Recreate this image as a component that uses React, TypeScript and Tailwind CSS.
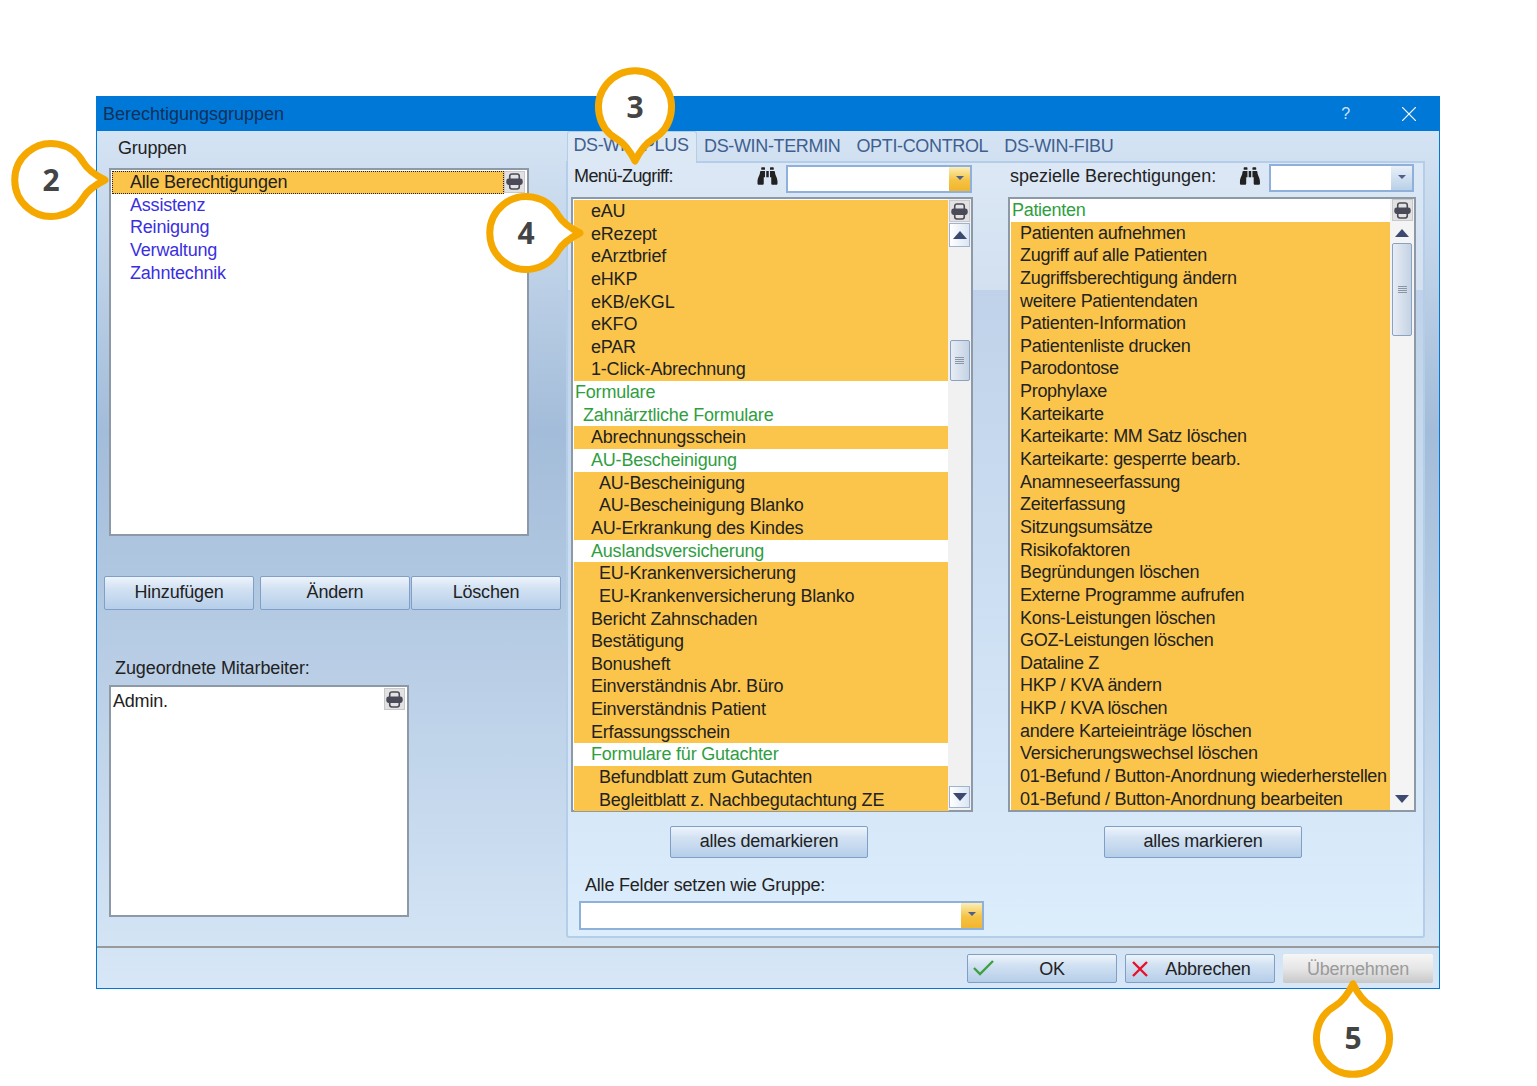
import { FaBinoculars } from 'react-icons/fa'

type Row = { label: string; level: 1 | 2 | 3 | 4; head?: boolean }

const menuRows: Row[] = [
  { label: 'eAU', level: 3 },
  { label: 'eRezept', level: 3 },
  { label: 'eArztbrief', level: 3 },
  { label: 'eHKP', level: 3 },
  { label: 'eKB/eKGL', level: 3 },
  { label: 'eKFO', level: 3 },
  { label: 'ePAR', level: 3 },
  { label: '1-Click-Abrechnung', level: 3 },
  { label: 'Formulare', level: 1, head: true },
  { label: 'Zahnärztliche Formulare', level: 2, head: true },
  { label: 'Abrechnungsschein', level: 3 },
  { label: 'AU-Bescheinigung', level: 3, head: true },
  { label: 'AU-Bescheinigung', level: 4 },
  { label: 'AU-Bescheinigung Blanko', level: 4 },
  { label: 'AU-Erkrankung des Kindes', level: 3 },
  { label: 'Auslandsversicherung', level: 3, head: true },
  { label: 'EU-Krankenversicherung', level: 4 },
  { label: 'EU-Krankenversicherung Blanko', level: 4 },
  { label: 'Bericht Zahnschaden', level: 3 },
  { label: 'Bestätigung', level: 3 },
  { label: 'Bonusheft', level: 3 },
  { label: 'Einverständnis Abr. Büro', level: 3 },
  { label: 'Einverständnis Patient', level: 3 },
  { label: 'Erfassungsschein', level: 3 },
  { label: 'Formulare für Gutachter', level: 3, head: true },
  { label: 'Befundblatt zum Gutachten', level: 4 },
  { label: 'Begleitblatt z. Nachbegutachtung ZE', level: 4 },
]

const specialRows = [
  'Patienten aufnehmen',
  'Zugriff auf alle Patienten',
  'Zugriffsberechtigung ändern',
  'weitere Patientendaten',
  'Patienten-Information',
  'Patientenliste drucken',
  'Parodontose',
  'Prophylaxe',
  'Karteikarte',
  'Karteikarte: MM Satz löschen',
  'Karteikarte: gesperrte bearb.',
  'Anamneseerfassung',
  'Zeiterfassung',
  'Sitzungsumsätze',
  'Risikofaktoren',
  'Begründungen löschen',
  'Externe Programme aufrufen',
  'Kons-Leistungen löschen',
  'GOZ-Leistungen löschen',
  'Dataline Z',
  'HKP / KVA ändern',
  'HKP / KVA löschen',
  'andere Karteieinträge löschen',
  'Versicherungswechsel löschen',
  '01-Befund / Button-Anordnung wiederherstellen',
  '01-Befund / Button-Anordnung bearbeiten',
]

const indent = { 1: 'pl-px', 2: 'pl-[9px]', 3: 'pl-[17px]', 4: 'pl-[25px]' }

function PrintIcon() {
  return (
    <svg viewBox="0 0 16 16" className="h-[17px] w-[17px]" fill="none" stroke="#4a4a58" strokeWidth="1.5">
      <path d="M3.5 6V3a2 2 0 0 1 2-2h5a2 2 0 0 1 2 2v3" />
      <rect x="1" y="6" width="14" height="4.5" rx="1.5" fill="#4a4a58" />
      <path d="M3.5 10v3a2 2 0 0 0 2 2h5a2 2 0 0 0 2-2v-3" />
    </svg>
  )
}

function PrintButton() {
  return (
    <div className="flex h-[22px] w-[21px] items-center justify-center border border-[#c8c8c8] bg-[#e2e2e2]">
      <PrintIcon />
    </div>
  )
}

function Arrow({ down }: { down?: boolean }) {
  return (
    <svg viewBox="0 0 14 8" className="h-[8px] w-[14px]">
      <path d={down ? 'M0 0h14L7 8z' : 'M7 0l7 8H0z'} fill="#3c4a70" />
    </svg>
  )
}

function Grip() {
  return (
    <div className="flex w-[9px] flex-col gap-px">
      <div className="h-px bg-[#8a95a5]" />
      <div className="h-px bg-[#8a95a5]" />
      <div className="h-px bg-[#8a95a5]" />
      <div className="h-px bg-[#8a95a5]" />
    </div>
  )
}

function ComboBox({ className, yellow }: { className: string; yellow?: boolean }) {
  return (
    <div className={`flex border-2 border-[#8fb0da] bg-white ${className}`}>
      <div className="flex-1" />
      <div
        className={`flex w-[21px] items-center justify-center pb-[2px] ${
          yellow
            ? 'bg-[linear-gradient(180deg,#fbeeb8,#f5c343_55%,#f2b52e)]'
            : 'bg-[linear-gradient(180deg,#e9f0f8,#b9d0e8)]'
        }`}
      >
        <svg viewBox="0 0 8 4" className="h-[4px] w-[8px]">
          <path d="M0 0h8L4 4z" fill="#4d5f8a" />
        </svg>
      </div>
    </div>
  )
}

function Btn({ label, className }: { label: string; className: string }) {
  return (
    <button className={`rounded-[2px] border border-[#7f9fc6] bg-[linear-gradient(180deg,#eef4fb,#d3e2f3_35%,#b5cee9)] text-center text-[#222] ${className}`}>
      {label}
    </button>
  )
}

function Callout({ n, left, top, angle }: { n: number; left: string; top: string; angle: number }) {
  return (
    <div className={`absolute z-20 h-[130px] w-[130px] ${left} ${top}`}>
      <svg viewBox="-65 -65 130 130" className="h-full w-full">
        <path
          transform={`rotate(${angle})`}
          d="M32 -18 A36.5 36.5 0 1 0 32 18 Q38 8 54 0 Q38 -8 32 -18 Z"
          fill="#fff"
          stroke="#f5a800"
          strokeWidth="7"
          strokeLinejoin="round"
        />
      </svg>
      <div className="absolute inset-0 flex items-center justify-center font-['Open_Sans',sans-serif] text-[30px] font-bold text-[#444]">
        {n}
      </div>
    </div>
  )
}

export default function App() {
  return (
    <div className="relative h-[1086px] w-[1537px] bg-white pl-[96px] pt-[96px] font-['Liberation_Sans',Arial,sans-serif] text-[18px] leading-[22.65px] tracking-[-0.2px] text-[#222]">
      <div className="flex h-[893px] w-[1344px] flex-col border border-[#0078d7]">
        {/* Title bar */}
        <div className="flex h-[34px] shrink-0 items-center bg-[#0078d7] pl-[6px] pr-[23px] text-[#10305a]">
          <span className="flex-1 tracking-normal">Berechtigungsgruppen</span>
          <span className="mr-[52px] text-[16px] text-[#cfe4fa]">?</span>
          <svg viewBox="0 0 14 14" className="h-[14px] w-[14px]" stroke="#fff" strokeWidth="1.2">
            <path d="M0 0l14 14M14 0L0 14" />
          </svg>
        </div>

        <div className="flex flex-1 flex-col bg-[linear-gradient(180deg,#d5e4f4_0%,#a3bcd9_35%,#d7e7f7_100%)]">
          <div className="flex flex-1">
            {/* Left column */}
            <div className="w-[469px] shrink-0 pl-[12px]">
              <div className="mt-[6px] pl-[9px]">Gruppen</div>
              <div className="relative mt-[8px] h-[368px] w-[420px] border-2 border-[#8e99a8] bg-white pl-[1px] pt-px">
                <div className="h-[23px] w-[392px] border border-dotted border-[#222] bg-[#fbc54c] pl-[17px] leading-[20px]">Alle Berechtigungen</div>
                <div className="pl-[18px] text-[#3a2fe0]">
                  <div>Assistenz</div>
                  <div>Reinigung</div>
                  <div>Verwaltung</div>
                  <div>Zahntechnik</div>
                </div>
                <div className="absolute right-[2px] top-px">
                  <PrintButton />
                </div>
              </div>

              <div className="mt-[40px] flex">
                <Btn label="Hinzufügen" className="-ml-[5px] h-[34px] w-[150px]" />
                <Btn label="Ändern" className="ml-[6px] h-[34px] w-[150px]" />
                <Btn label="Löschen" className="ml-px h-[34px] w-[150px]" />
              </div>

              <div className="mt-[47px] pl-[6px] tracking-[-0.1px]">Zugeordnete Mitarbeiter:</div>
              <div className="relative mt-[6px] h-[232px] w-[300px] border-2 border-[#8e99a8] bg-white pl-[2px] pt-[3px]">
                Admin.
                <div className="absolute right-[2px] top-px">
                  <PrintButton />
                </div>
              </div>
            </div>

            {/* Tab area */}
            <div className="flex w-[860px] shrink-0 flex-col">
              <div className="flex h-[30px] items-start pl-[3px] tracking-[-0.35px] text-[#3f5f8f]">
                <div className="relative z-10 -ml-[2px] flex h-[32px] w-[130px] items-start justify-center rounded-t-[3px] border border-b-0 border-[#b4cde8] bg-[#dde8f5] pr-[2px] pt-[2px]">DS-WIN-PLUS</div>
                <div className="ml-[7px] mt-[4px]">DS-WIN-TERMIN</div>
                <div className="ml-[16px] mt-[4px]">OPTI-CONTROL</div>
                <div className="ml-[16px] mt-[4px]">DS-WIN-FIBU</div>
              </div>

              <div className="h-[777px] w-[859px] rounded-b-[3px] border-2 border-[#b4cde8] bg-[linear-gradient(180deg,#dce8f5,#d2e0f0_16.4%,#bfd2e9_16.4%,#dcedfc)]">
                <div className="flex">
                  {/* Menu access */}
                  <div className="w-[436px] shrink-0 pl-[3px]">
                    <div className="flex h-[34px]">
                      <span className="ml-[3px] mt-[2px] w-[182px] tracking-[-0.6px]">Menü-Zugriff:</span>
                      <FaBinoculars className="mt-[3px] h-[20px] w-[23px] text-[#222]" />
                      <ComboBox yellow className="ml-[7px] mt-[2px] h-[28px] w-[186px]" />
                    </div>
                    <div className="relative h-[615px] w-[402px] border-2 border-[#8e99a8] bg-white">
                      <div className="w-[376px] pl-px pt-px">
                        {menuRows.map((row, i) => (
                          <div
                            key={i}
                            className={`h-[22.65px] whitespace-nowrap ${indent[row.level]} ${row.head ? 'text-[#2f9e3f]' : 'bg-[#fbc54c]'}`}
                          >
                            {row.label}
                          </div>
                        ))}
                      </div>
                      <div className="absolute bottom-0 right-0 top-0 flex w-[23px] flex-col items-center bg-[#f1f1f1] pt-[1px]">
                        <PrintButton />
                        <div className="mt-[1px] flex h-[24px] w-[21px] items-center justify-center border border-[#9fb3cc] bg-[linear-gradient(90deg,#fff,#dbe6f3)]">
                          <Arrow />
                        </div>
                        <div className="mt-[93px] flex h-[41px] w-[20px] items-center justify-center rounded-[2px] border border-[#8aa2c0] bg-[linear-gradient(90deg,#e8edf4,#c4d2e4)]">
                          <Grip />
                        </div>
                        <div className="flex-1" />
                        <div className="mb-[2px] flex h-[22px] w-[21px] items-center justify-center border border-[#9fb3cc] bg-[linear-gradient(90deg,#fff,#dbe6f3)]">
                          <Arrow down />
                        </div>
                      </div>
                    </div>
                  </div>

                  {/* Special permissions */}
                  <div className="w-[410px] shrink-0 pl-[4px]">
                    <div className="flex h-[34px]">
                      <span className="ml-[2px] mt-[2px] w-[230px] tracking-normal">spezielle Berechtigungen:</span>
                      <FaBinoculars className="mt-[3px] h-[20px] w-[22px] text-[#222]" />
                      <ComboBox className="ml-[8px] mt-px h-[28px] w-[146px]" />
                    </div>
                    <div className="relative h-[615px] w-[408px] border-2 border-[#8e99a8] bg-white tracking-[-0.3px]">
                      <div className="w-[381px] pl-px">
                        <div className="h-[22.65px] pl-[1px] text-[#2f9e3f]">Patienten</div>
                        {specialRows.map((label) => (
                          <div key={label} className="h-[22.65px] whitespace-nowrap bg-[#fbc54c] pl-[9px]">
                            {label}
                          </div>
                        ))}
                      </div>
                      <div className="absolute bottom-0 right-0 top-0 flex w-[24px] flex-col items-center bg-[#f4f4f4]">
                        <PrintButton />
                        <div className="mt-[8px]">
                          <Arrow />
                        </div>
                        <div className="mt-[6px] flex h-[93px] w-[20px] items-center justify-center rounded-[2px] border border-[#8aa2c0] bg-[linear-gradient(90deg,#e8edf4,#c4d2e4)]">
                          <Grip />
                        </div>
                        <div className="flex-1" />
                        <div className="mb-[7px]">
                          <Arrow down />
                        </div>
                      </div>
                    </div>
                  </div>
                </div>

                <div className="mt-[14px] flex">
                  <Btn label="alles demarkieren" className="ml-[102px] h-[32px] w-[198px] pb-[2px]" />
                  <Btn label="alles markieren" className="ml-[236px] h-[32px] w-[198px] pb-[2px]" />
                </div>

                <div className="mt-[16px] pl-[17px]">Alle Felder setzen wie Gruppe:</div>
                <ComboBox yellow className="ml-[11px] mt-[4px] h-[29px] w-[405px]" />
              </div>
            </div>
          </div>

          {/* Footer */}
          <div className="flex h-[42px] items-start justify-end gap-[8px] border-t-2 border-[#9a9a9a] pr-[6px] pt-[6px]">
            <button className="relative h-[29px] w-[150px] rounded-[2px] border border-[#7f9fc6] bg-[linear-gradient(180deg,#eef4fb,#d3e2f3_35%,#b5cee9)] pl-[20px] pt-px text-center">
              <svg viewBox="0 0 22 16" className="absolute left-[5px] top-[5px] h-[16px] w-[22px]" fill="none" stroke="#3fa03f" strokeWidth="2.4">
                <path d="M1 8l6 6L20 1" />
              </svg>
              OK
            </button>
            <button className="relative h-[29px] w-[150px] rounded-[2px] border border-[#7f9fc6] bg-[linear-gradient(180deg,#eef4fb,#d3e2f3_35%,#b5cee9)] pl-[16px] pt-px text-center">
              <svg viewBox="0 0 16 16" className="absolute left-[6px] top-[6px] h-[16px] w-[16px]" fill="none" stroke="#e8102a" strokeWidth="2.4">
                <path d="M1 1l14 14M15 1L1 15" />
              </svg>
              Abbrechen
            </button>
            <button className="h-[29px] w-[150px] rounded-[2px] bg-[linear-gradient(180deg,#f6f6f6,#e6e6e6_50%,#c8c8c8)] pt-px text-center text-[#9a9a9a]">Übernehmen</button>
          </div>
        </div>
      </div>

      {/* Numbered callouts over the dialog */}
      <Callout n={2} left="left-[-14px]" top="top-[115px]" angle={0} />
      <Callout n={3} left="left-[570px]" top="top-[42px]" angle={90} />
      <Callout n={4} left="left-[461px]" top="top-[168px]" angle={0} />
      <Callout n={5} left="left-[1288px]" top="top-[973px]" angle={-90} />
    </div>
  )
}
